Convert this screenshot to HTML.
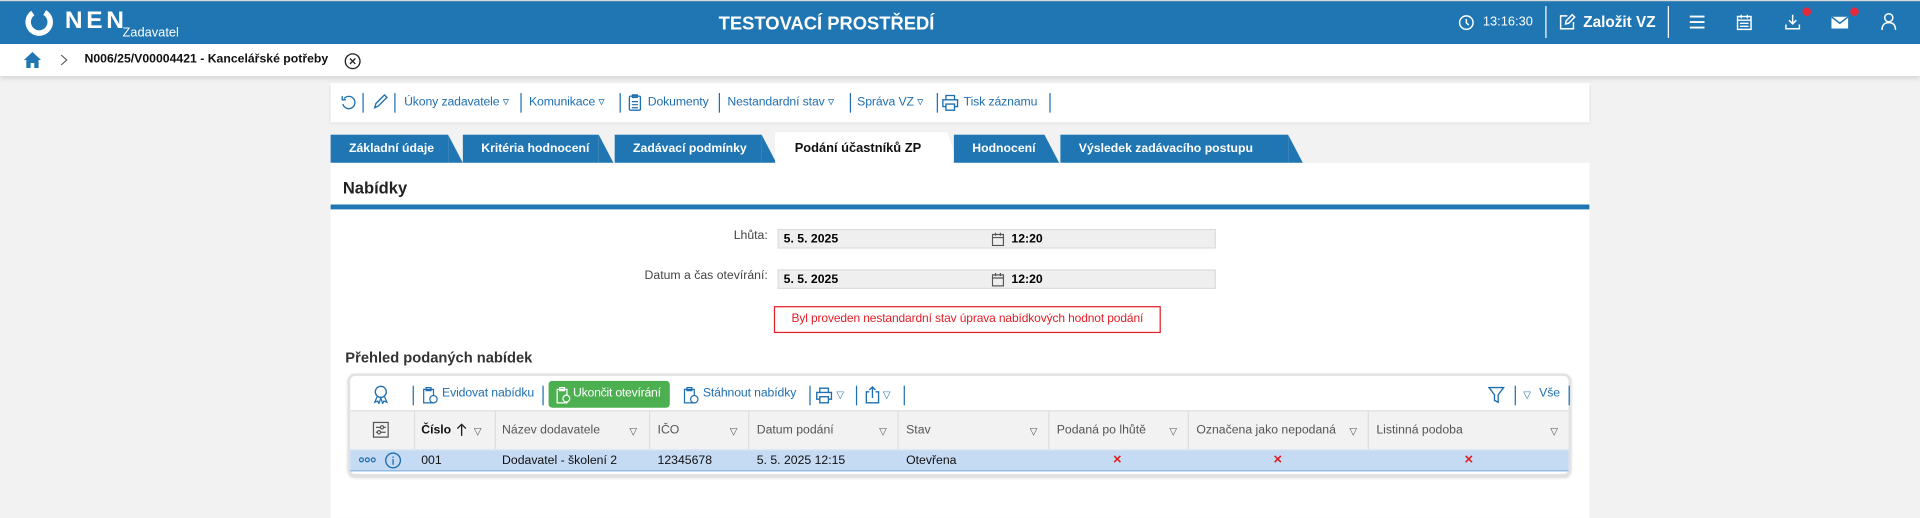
<!DOCTYPE html>
<html><head><meta charset="utf-8"><style>
*{margin:0;padding:0;box-sizing:border-box}
html,body{width:1920px;height:504px;overflow:hidden;background:#f2f2f2;font-family:"Liberation Sans",sans-serif}
.s{position:absolute;left:0;top:0;width:1568px;height:412px;transform:scale(1.22449);transform-origin:0 0}
.a{position:absolute;white-space:nowrap}
.hdr{left:0;top:0;width:1568px;height:36px;background:#1f76b3;border-top:1px solid #d8d8d8}
.w{color:#fff}
.tb{color:#1f6fb0;font-size:10px;top:78px;letter-spacing:-0.1px}
.sep{position:absolute;width:1px;background:#1f6fb0}
.tab{position:absolute;top:110px;height:23px;background:#1f76b3;color:#fff;font-weight:bold;font-size:10px;line-height:24px;padding-left:15px}
.tab:after{content:"";position:absolute;right:-12px;top:0;border-left:12px solid #1f76b3;border-top:23px solid transparent}
.lbl{font-size:10px;color:#444}
.inp{position:absolute;left:635px;width:358px;height:16px;background:#efefef;border:1px solid #ddd;font-size:10px;font-weight:bold;line-height:15px}
.th{font-size:10px;color:#555;top:346px}
.td{font-size:10px;color:#111;top:371px}
.csep{position:absolute;top:336px;width:1px;height:31px;background:#ddd}
.dd{font-size:8px;color:#555}
.x{color:#e02020;font-size:12px;font-weight:bold;top:368px}
</style></head><body><div class="s">
<div class="a hdr"></div>
<svg class="a" style="left:20px;top:6px" width="24" height="24" viewBox="0 0 24 24"><circle cx="12" cy="12" r="9" fill="none" stroke="#fff" stroke-width="4.5" stroke-dasharray="46 11" transform="rotate(-60 12 12)"/></svg>
<div class="a w" style="left:53px;top:6px;font-size:20px;font-weight:bold;letter-spacing:3px">NEN</div>
<div class="a w" style="left:100px;top:21px;font-size:10.5px">Zadavatel</div>
<div class="a w" style="left:577px;top:11px;font-size:15px;font-weight:bold;width:196px;text-align:center">TESTOVACÍ PROSTŘEDÍ</div>
<svg class="a" style="left:1191px;top:12px" width="13" height="13" viewBox="0 0 13 13"><circle cx="6.5" cy="6.5" r="5.5" fill="none" stroke="#fff" stroke-width="1.2"/><path d="M6.5 3.5V6.5L8.5 8.5" stroke="#fff" stroke-width="1.2" fill="none"/></svg>
<div class="a w" style="left:1211px;top:12px;font-size:10.5px">13:16:30</div>
<div class="sep" style="left:1262px;top:5px;height:26px;background:#fff;width:1.2px"></div>
<svg class="a" style="left:1273px;top:11px" width="14" height="14"><path d="M7 2H1.5V12.5H12V7M5.5 8.5L6 6 11 1 13 3 8 8z" fill="none" stroke="#fff" stroke-width="1.2"/></svg>
<div class="a w" style="left:1293px;top:11px;font-size:12.5px;font-weight:bold">Založit VZ</div>
<div class="sep" style="left:1362px;top:5px;height:26px;background:#fff;width:1.2px"></div>
<svg class="a" style="left:1379px;top:12px" width="14" height="12"><path d="M1 1.5H13M1 6H13M1 10.5H13" stroke="#fff" stroke-width="1.5"/></svg>
<svg class="a" style="left:1418px;top:11px" width="13" height="14"><rect x="1" y="2.5" width="11" height="10.5" fill="none" stroke="#fff" stroke-width="1.2"/><path d="M1 5.5H12M4 1V4M9 1V4M3 8H10M3 10.5H10" stroke="#fff" stroke-width="1.1"/></svg>
<svg class="a" style="left:1457px;top:11px" width="14" height="14"><path d="M7 1V8M4 5.5L7 8.5 10 5.5M1.5 9V12.5H12.5V9" fill="none" stroke="#fff" stroke-width="1.2"/></svg>
<div class="a" style="left:1472px;top:6px;width:7px;height:7px;border-radius:50%;background:#e5283a"></div>
<svg class="a" style="left:1495px;top:13px" width="15" height="11"><rect x="0.7" y="0.7" width="13.6" height="9.6" fill="#fff"/><path d="M1 1L7.5 6 14 1" stroke="#1f76b3" stroke-width="1.2" fill="none"/></svg>
<div class="a" style="left:1511px;top:6px;width:7px;height:7px;border-radius:50%;background:#e5283a"></div>
<svg class="a" style="left:1536px;top:10px" width="13" height="15"><circle cx="6.5" cy="4.5" r="3.3" fill="none" stroke="#fff" stroke-width="1.2"/><path d="M1 14.5C1 10 3.5 8.5 6.5 8.5S12 10 12 14.5" fill="none" stroke="#fff" stroke-width="1.2"/></svg>
<div class="a" style="left:0;top:36px;width:1568px;height:26px;background:#fff;box-shadow:0 2px 4px rgba(0,0,0,.12)"></div>
<svg class="a" style="left:19px;top:42px" width="15" height="14"><path d="M7.5 0.5L0.5 7H2.5V13.5H6V9.5H9V13.5H12.5V7H14.5z" fill="#1f76b3"/></svg>
<svg class="a" style="left:49px;top:44px" width="7" height="10"><path d="M1 1L5.5 5 1 9" stroke="#666" fill="none" stroke-width="1"/></svg>
<div class="a" style="left:69px;top:43px;font-size:10px;font-weight:bold;color:#111">N006/25/V00004421 - Kancelářské potřeby</div>
<svg class="a" style="left:281px;top:43px" width="14" height="14"><circle cx="7" cy="7" r="6" fill="none" stroke="#222" stroke-width="1.1"/><path d="M4.8 4.8L9.2 9.2M9.2 4.8L4.8 9.2" stroke="#222" stroke-width="1.1"/></svg>
<div class="a" style="left:270px;top:68px;width:1028px;height:32px;background:#fff;box-shadow:0 1px 2px rgba(0,0,0,.1)"></div>
<svg class="a" style="left:278px;top:77px" width="13" height="13"><path d="M3 3.5A5 5 0 1 1 2 8M1.5 1.5V4.5H4.5" fill="none" stroke="#1f6fb0" stroke-width="1.1"/></svg>
<div class="sep" style="left:296px;top:76px;height:16px"></div>
<svg class="a" style="left:304px;top:76px" width="13" height="14"><path d="M2 12L3 8.5 10 1.5 12 3.5 5 10.5z" fill="none" stroke="#1f6fb0" stroke-width="1.1"/></svg>
<div class="sep" style="left:322px;top:76px;height:16px"></div>
<div class="a tb" style="left:330px">Úkony zadavatele ▿</div>
<div class="sep" style="left:425px;top:76px;height:16px"></div>
<div class="a tb" style="left:432px">Komunikace ▿</div>
<div class="sep" style="left:506px;top:76px;height:16px"></div>
<svg class="a" style="left:513px;top:76px" width="11" height="15"><rect x="1" y="2.5" width="9" height="11.5" rx="1" fill="none" stroke="#1f6fb0" stroke-width="1.1"/><path d="M3.5 1.5H7.5V3.5H3.5zM3 7H8M3 9.5H8M3 12H8" stroke="#1f6fb0" fill="none"/></svg>
<div class="a tb" style="left:529px">Dokumenty</div>
<div class="sep" style="left:587px;top:76px;height:16px"></div>
<div class="a tb" style="left:594px">Nestandardní stav ▿</div>
<div class="sep" style="left:694px;top:76px;height:16px"></div>
<div class="a tb" style="left:700px">Správa VZ ▿</div>
<div class="sep" style="left:765px;top:76px;height:16px"></div>
<svg class="a" style="left:769px;top:77px" width="14" height="14"><path d="M3.5 4.5V1H10.5V4.5M3.5 10H1V4.5H13V10H10.5M3.5 8H10.5V13H3.5z" fill="none" stroke="#1f6fb0" stroke-width="1.1"/></svg>
<div class="a tb" style="left:787px">Tisk záznamu</div>
<div class="sep" style="left:857px;top:76px;height:16px"></div>
<div class="tab" style="left:270px;width:96px">Základní údaje</div>
<div class="tab" style="left:378px;width:111px">Kritéria hodnocení</div>
<div class="tab" style="left:502px;width:120px">Zadávací podmínky</div>
<div class="a" style="left:633px;top:108px;width:141px;height:25px;background:#fff;font-size:10.5px;font-weight:bold;line-height:27px;padding-left:16px;color:#111">Podání účastníků ZP</div>
<div class="a" style="left:774px;top:108px;border-left:8px solid #fff;border-top:25px solid transparent"></div>
<div class="tab" style="left:779px;width:74px">Hodnocení</div>
<div class="tab" style="left:866px;width:186px">Výsledek zadávacího postupu</div>
<div class="a" style="left:270px;top:133px;width:1028px;height:290px;background:#fff"></div>
<div class="a" style="left:280px;top:146px;font-size:13.5px;font-weight:bold;color:#222">Nabídky</div>
<div class="a" style="left:270px;top:167px;width:1028px;height:3.5px;background:#1f76b3"></div>
<div class="a lbl" style="left:500px;width:127px;text-align:right;top:187px">Lhůta:</div>
<div class="inp" style="top:187px"><span class="a" style="left:4px">5. 5. 2025</span><svg class="a" style="left:174px;top:2px" width="10" height="11"><rect x="0.5" y="1.5" width="9" height="9" fill="none" stroke="#555"/><path d="M0.5 4H9.5M3 0V2.5M7 0V2.5" stroke="#555"/></svg><span class="a" style="left:190px">12:20</span></div>
<div class="a lbl" style="left:450px;width:177px;text-align:right;top:220px">Datum a čas otevírání:</div>
<div class="inp" style="top:220px"><span class="a" style="left:4px">5. 5. 2025</span><svg class="a" style="left:174px;top:2px" width="10" height="11"><rect x="0.5" y="1.5" width="9" height="9" fill="none" stroke="#555"/><path d="M0.5 4H9.5M3 0V2.5M7 0V2.5" stroke="#555"/></svg><span class="a" style="left:190px">12:20</span></div>
<div class="a" style="left:632px;top:250px;width:316px;height:22px;border:1px solid #e41e26;color:#e41e26;font-size:9.8px;line-height:20px;text-align:center;letter-spacing:-0.1px">Byl proveden nestandardní stav úprava nabídkových hodnot podání</div>
<div class="a" style="left:282px;top:285px;font-size:12px;font-weight:bold;color:#333">Přehled podaných nabídek</div>
<div class="a" style="left:284px;top:305px;width:999px;height:84px;border:2px solid #e2e2e2;border-radius:6px;background:#fff;box-shadow:0 1px 2px rgba(0,0,0,.15)"></div>
<svg class="a" style="left:304px;top:314px" width="14" height="16"><circle cx="7" cy="6" r="4.5" fill="none" stroke="#1f6fb0" stroke-width="1.1"/><path d="M4 10L2 14.5 4.5 13.5 5.5 15.5 7 11M10 10L12 14.5 9.5 13.5 8.5 15.5 7 11" fill="none" stroke="#1f6fb0" stroke-width="1"/></svg>
<div class="sep" style="left:337px;top:315px;height:16px"></div>
<svg class="a" style="left:344px;top:315px" width="14" height="15"><path d="M2 3H10V14H2zM4 1.5H8V4H4z" fill="none" stroke="#1f6fb0"/><circle cx="10" cy="11" r="3" fill="#fff" stroke="#1f6fb0"/></svg>
<div class="a tb" style="left:361px;top:316px">Evidovat nabídku</div>
<div class="sep" style="left:443px;top:315px;height:16px"></div>
<div class="a" style="left:448px;top:311px;width:99px;height:22px;background:#4caf50;border-radius:3px"></div>
<svg class="a" style="left:453px;top:315px" width="13" height="15"><path d="M2 3H10V14H2zM4 1.5H8V4H4z" fill="none" stroke="#fff"/><circle cx="9.5" cy="10.5" r="2.8" fill="#4caf50" stroke="#fff"/></svg>
<div class="a" style="left:468px;top:316px;color:#fff;font-size:10px;letter-spacing:-0.2px">Ukončit otevírání</div>
<svg class="a" style="left:557px;top:315px" width="14" height="15"><path d="M2 3H10V14H2zM4 1.5H8V4H4z" fill="none" stroke="#1f6fb0"/><circle cx="10" cy="11" r="3" fill="#fff" stroke="#1f6fb0"/></svg>
<div class="a tb" style="left:574px;top:316px">Stáhnout nabídky</div>
<div class="sep" style="left:661px;top:315px;height:16px"></div>
<svg class="a" style="left:666px;top:316px" width="14" height="14"><path d="M3.5 4.5V1H10.5V4.5M3.5 10H1V4.5H13V10H10.5M3.5 8H10.5V13H3.5z" fill="none" stroke="#1f6fb0" stroke-width="1.1"/></svg>
<div class="a dd" style="left:683px;top:318px;color:#1f6fb0">▽</div>
<div class="sep" style="left:699px;top:315px;height:16px"></div>
<svg class="a" style="left:706px;top:315px" width="13" height="15"><path d="M4 5H1.5V14H11.5V5H9M6.5 10V1M4 3.5L6.5 1 9 3.5" fill="none" stroke="#1f6fb0" stroke-width="1.1"/></svg>
<div class="a dd" style="left:721px;top:318px;color:#1f6fb0">▽</div>
<div class="sep" style="left:738px;top:315px;height:16px"></div>
<svg class="a" style="left:1215px;top:315px" width="14" height="15"><path d="M1 1.5H13L8.5 7.5V13.5L5.5 12V7.5z" fill="none" stroke="#1f6fb0" stroke-width="1.1"/></svg>
<div class="sep" style="left:1237px;top:315px;height:16px"></div>
<div class="a dd" style="left:1244px;top:318px;color:#1f6fb0">▽</div>
<div class="a tb" style="left:1257px;top:316px">Vše</div>
<div class="sep" style="left:1281px;top:315px;height:16px"></div>
<div class="a" style="left:286px;top:335px;width:995px;height:32px;background:#f2f2f2;border-top:1px solid #e0e0e0"></div>
<svg class="a" style="left:304px;top:344px" width="14" height="14"><rect x="1" y="1" width="12" height="12" fill="none" stroke="#555"/><path d="M3 5H11M3 9H11" stroke="#555"/><circle cx="8" cy="5" r="1.3" fill="#fff" stroke="#555"/><circle cx="5.5" cy="9" r="1.3" fill="#fff" stroke="#555"/></svg>
<div class="csep" style="left:338px"></div>
<div class="a th" style="left:344px;color:#111;font-weight:bold">Číslo</div>
<svg class="a" style="left:372px;top:345px" width="10" height="12"><path d="M5 11V1.5M1.5 5L5 1.5 8.5 5" fill="none" stroke="#222" stroke-width="1.1"/></svg>
<div class="a dd" style="left:387px;top:348px">▽</div>
<div class="csep" style="left:404px"></div>
<div class="a th" style="left:410px">Název dodavatele</div><div class="a dd" style="left:514px;top:348px">▽</div>
<div class="csep" style="left:530px"></div>
<div class="a th" style="left:537px">IČO</div><div class="a dd" style="left:596px;top:348px">▽</div>
<div class="csep" style="left:611px"></div>
<div class="a th" style="left:618px">Datum podání</div><div class="a dd" style="left:718px;top:348px">▽</div>
<div class="csep" style="left:733px"></div>
<div class="a th" style="left:740px">Stav</div><div class="a dd" style="left:841px;top:348px">▽</div>
<div class="csep" style="left:856px"></div>
<div class="a th" style="left:863px">Podaná po lhůtě</div><div class="a dd" style="left:955px;top:348px">▽</div>
<div class="csep" style="left:970px"></div>
<div class="a th" style="left:977px">Označena jako nepodaná</div><div class="a dd" style="left:1102px;top:348px">▽</div>
<div class="csep" style="left:1117px"></div>
<div class="a th" style="left:1124px">Listinná podoba</div><div class="a dd" style="left:1266px;top:348px">▽</div>
<div class="a" style="left:286px;top:367px;width:995px;height:18px;background:#c5daf3;border-top:1px solid #d8e4f2;border-bottom:1.5px solid #86b3e3"></div>
<svg class="a" style="left:293px;top:373px" width="14" height="5"><circle cx="2.2" cy="2.5" r="1.6" fill="none" stroke="#1f6fb0"/><circle cx="7" cy="2.5" r="1.6" fill="none" stroke="#1f6fb0"/><circle cx="11.8" cy="2.5" r="1.6" fill="none" stroke="#1f6fb0"/></svg>
<svg class="a" style="left:314px;top:369px" width="14" height="14"><circle cx="7" cy="7" r="6" fill="none" stroke="#1f6fb0" stroke-width="1.1"/><path d="M7 6V10.5M7 3.8V4.8" stroke="#1f6fb0" stroke-width="1.1"/></svg>
<div class="a td" style="left:344px">001</div>
<div class="a td" style="left:410px">Dodavatel - školení 2</div>
<div class="a td" style="left:537px">12345678</div>
<div class="a td" style="left:618px">5. 5. 2025 12:15</div>
<div class="a td" style="left:740px">Otevřena</div>
<div class="a x" style="left:909px">×</div>
<div class="a x" style="left:1040px">×</div>
<div class="a x" style="left:1196px">×</div>
</div></body></html>
